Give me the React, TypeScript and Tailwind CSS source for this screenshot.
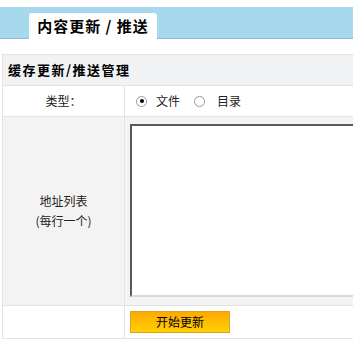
export default function App() {
  return (
    <div className="w-[353px] h-[352px] overflow-hidden bg-white font-['Noto_Sans_CJK_SC',sans-serif] text-[12px] text-[#222]">
      <div className="h-[7px]" />
      <div className="h-[32px] bg-[#a6d9ed] border-b border-[#88bddb] flex items-end pl-[29px]">
        <div className="relative -mb-px w-[128px] h-[26px] bg-white rounded-t-[3px] flex items-center justify-center text-[15px] font-bold text-black tracking-[1px]">
          内容更新 / 推送
        </div>
      </div>
      <div className="mt-[15px] ml-[2px] w-[420px] border border-[#e3e3e3]">
        <div className="h-[31px] bg-[#f1f2f4] border-b border-[#e3e3e3] flex items-center pl-[5px] font-bold text-[13px] tracking-[1.5px] text-black">
          缓存更新/推送管理
        </div>
        <div className="h-[31px] grid grid-cols-[122px_1fr] border-b border-[#e3e3e3]">
          <div className="border-r border-[#e3e3e3] flex items-center justify-center">类型：</div>
          <div className="flex items-center pl-[11px]">
            <span className="w-[11px] h-[11px] rounded-full border border-[#9a9a9a] bg-white flex items-center justify-center">
              <span className="w-[4px] h-[4px] rounded-full bg-black" />
            </span>
            <span className="ml-[9px]">文件</span>
            <span className="ml-[14px] w-[11px] h-[11px] rounded-full border border-[#9a9a9a] bg-white" />
            <span className="ml-[12px]">目录</span>
          </div>
        </div>
        <div className="h-[189px] grid grid-cols-[122px_1fr] border-b border-[#e3e3e3] bg-[#f3f3f3]">
          <div className="border-r border-[#e3e3e3] flex flex-col items-center justify-center leading-[20px]">
            <span>地址列表</span>
            <span>(每行一个)</span>
          </div>
          <div className="pl-[5px] pt-[7px]">
            <div className="w-[300px] h-[173px] bg-white border-2 border-t-[#5a5a5a] border-l-[#5a5a5a] border-b-[#d8d8d8] border-r-[#d8d8d8]" />
          </div>
        </div>
        <div className="h-[32px] grid grid-cols-[122px_1fr]">
          <div className="border-r border-[#e3e3e3]" />
          <div className="pl-[5px] pt-[5px]">
            <div className="w-[100px] h-[22px] border border-[#d9a520] bg-gradient-to-b from-[#ffa800] to-[#ffd000] flex items-center justify-center text-black">
              开始更新
            </div>
          </div>
        </div>
      </div>
    </div>
  );
}
